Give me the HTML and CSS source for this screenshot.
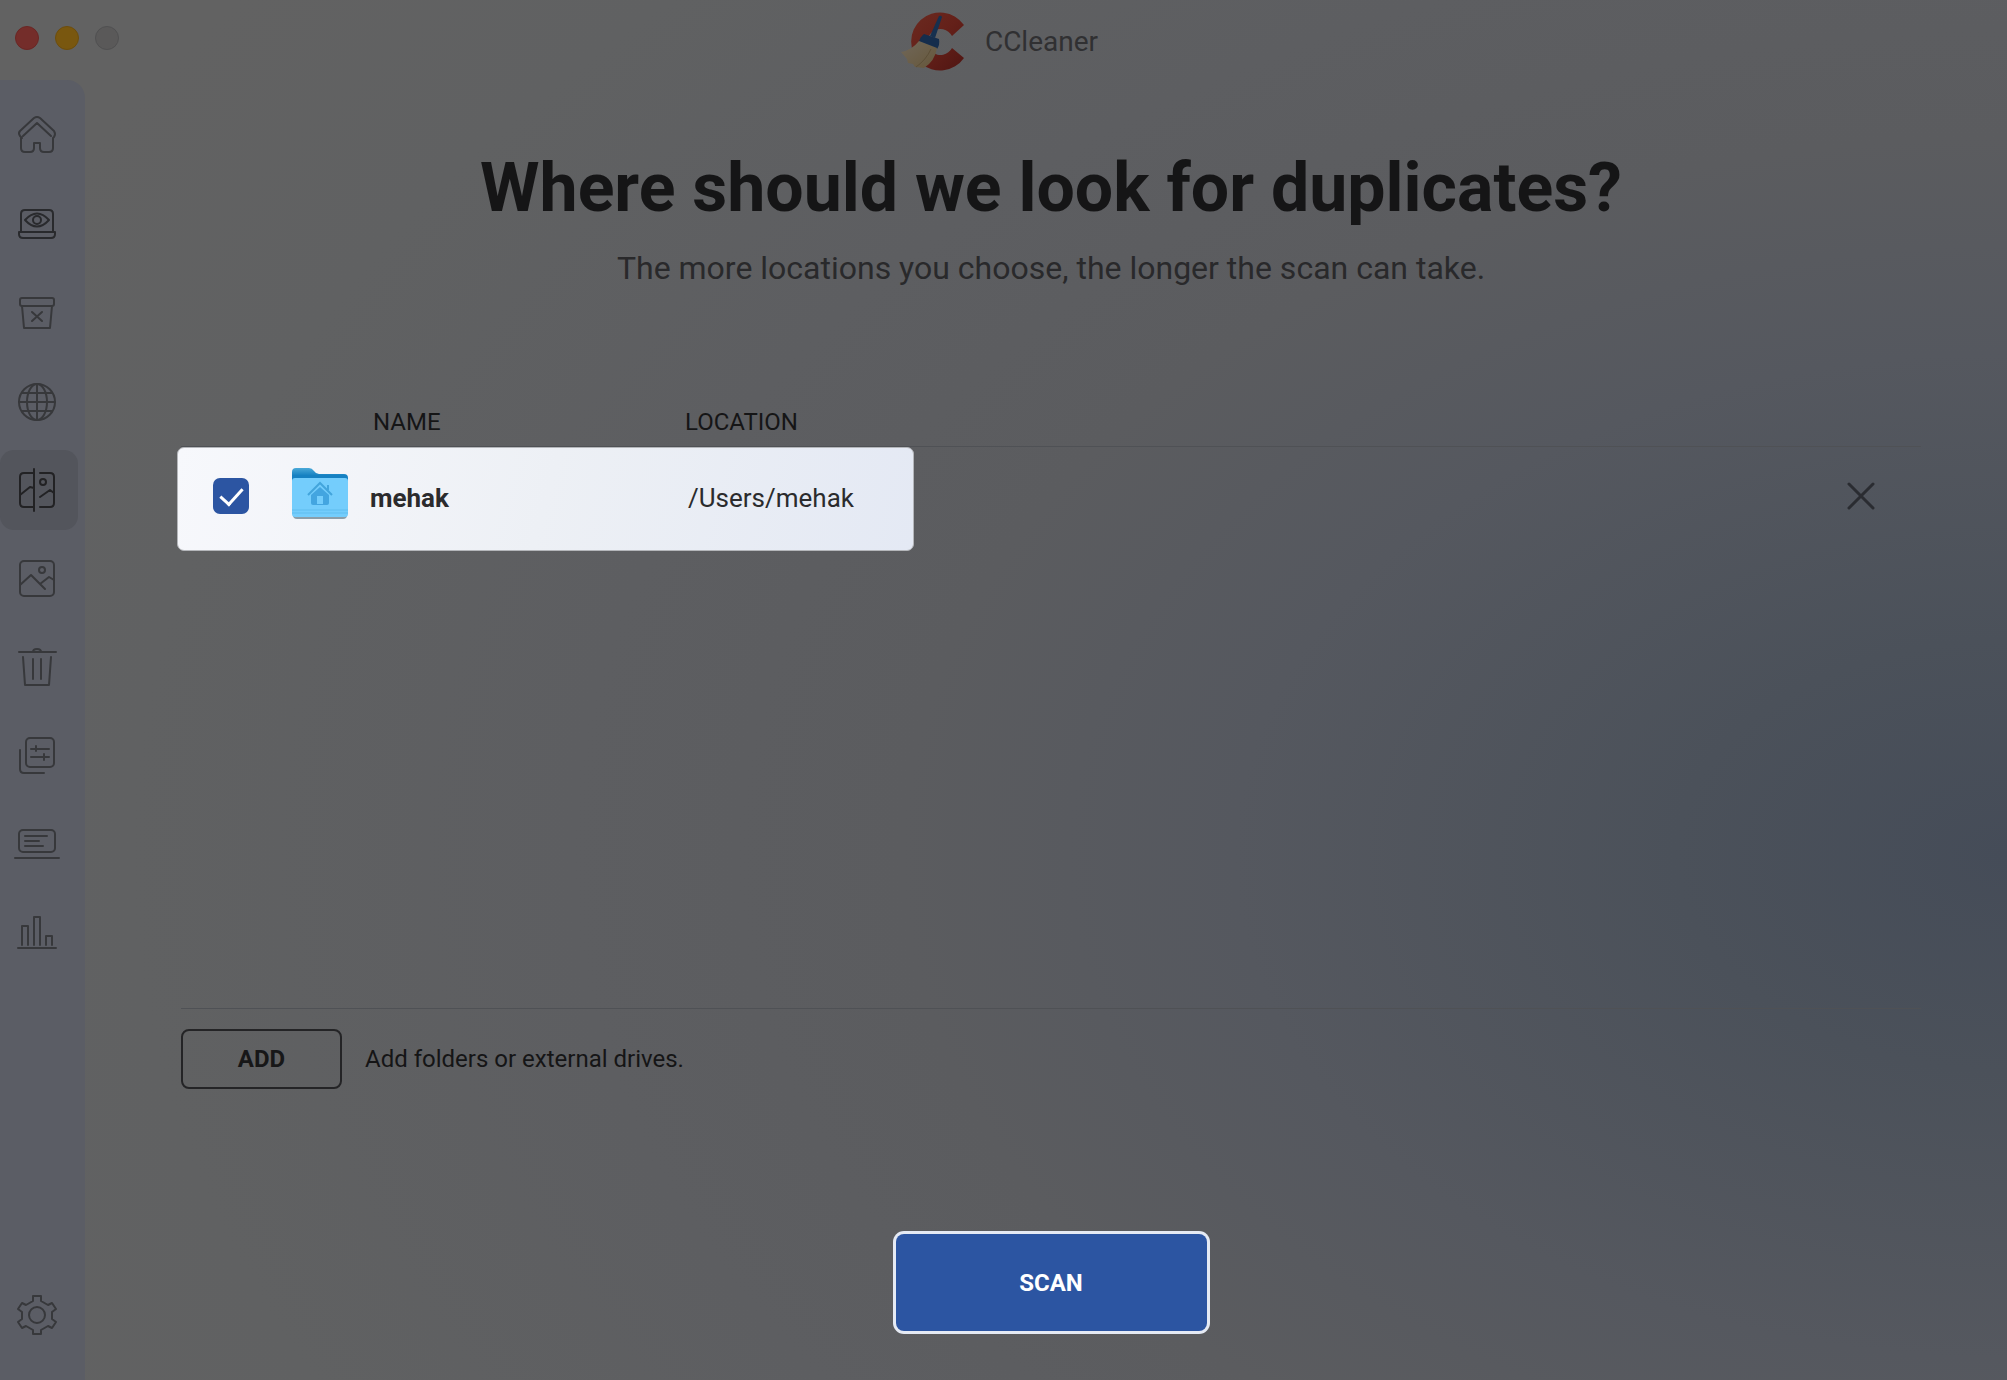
FILE: index.html
```
<!DOCTYPE html>
<html lang="en">
<head>
    <meta charset="UTF-8">
    <meta name="viewport" content="width=device-width, initial-scale=1.0">
    <title>CCleaner</title>
    <link rel="stylesheet" href="styles.css">
</head>
<body>
    <header class="titlebar">
        <div class="window-buttons">
            <button class="dot red" aria-label="Close"></button>
            <button class="dot yellow" aria-label="Minimize"></button>
            <button class="dot gray" aria-label="Zoom"></button>
        </div>
        <svg class="logo" viewBox="0 0 64 60" aria-hidden="true">
            <defs>
                <linearGradient id="ring" x1="0" y1="0" x2="1" y2="1">
                    <stop offset="0" stop-color="#6b2a20"/>
                    <stop offset="0.5" stop-color="#642019"/>
                    <stop offset="1" stop-color="#4f1512"/>
                </linearGradient>
                <linearGradient id="brush" x1="0" y1="0" x2="1" y2="1">
                    <stop offset="0" stop-color="#70675a"/>
                    <stop offset="1" stop-color="#66573a"/>
                </linearGradient>
            </defs>
            <path d="M63 13 A29 29 0 1 0 63 46 L51 36 A13 13 0 1 1 51 24 Z" fill="url(#ring)"/>
            <path d="M38 4 q2 -1 3 1 L34 26 L29 24 Z" fill="#16304f"/>
            <path d="M23 22 L38 27 Q39 33 36 37 L18 30 Q19 25 23 22 Z" fill="#152d4c"/>
            <path d="M18 29 L36 36 Q34 49 23 56 L14 55 L12 52 L7 51 L6 47 L0 40 Q11 38 18 29 Z" fill="url(#brush)"/>
            <path d="M30 37 Q25 48 15 55" fill="none" stroke="#5c4f37"/>
        </svg>
        <span class="app-name">CCleaner</span>
    </header>

    <div class="window">
        <nav class="sidebar">
            <a href="#" aria-label="Home">
                <svg viewBox="0 0 48 48"><path d="M9 28 L7 26 Q5 23 7 21 L21 8 Q24 6 27 8 L41 21 Q43 24 41 27 L40 28 V38 Q40 42 36 42 H31 Q27 42 27 38 V33 H21 V38 Q21 42 17 42 H12 Q8 42 8 38 V28 M10 26 L24 13 L38 26"/></svg>
            </a>
            <a href="#" aria-label="Privacy" class="dark">
                <svg viewBox="0 0 48 48"><path d="M8 33 V15 Q8 11 12 11 H36 Q40 11 40 15 V33 M6 33 H42 V35 Q42 39 38 39 H10 Q6 39 6 35 Z M12 21 Q24 8 36 21 Q24 34 12 21 Z"/><circle cx="24" cy="21" r="4"/></svg>
            </a>
            <a href="#" aria-label="Clean">
                <svg viewBox="0 0 48 48"><rect x="7" y="10" width="34" height="8" rx="2"/><path d="M9 18 L11 40 H37 L39 18 M19 24 L29 33 M29 24 L19 33"/></svg>
            </a>
            <a href="#" aria-label="Browser">
                <svg viewBox="0 0 48 48"><circle cx="24" cy="25" r="18"/><ellipse cx="24" cy="25" rx="10" ry="18"/><path d="M24 7 V43 M6 25 H42 M9 16 H39 M9 34 H39"/></svg>
            </a>
            <a href="#" aria-label="Duplicates" class="active">
                <svg viewBox="0 0 48 48"><path d="M21 3 V45 M21 7 H11 Q7 7 7 11 V37 Q7 41 11 41 H21 M27 7 H37 Q41 7 41 11 V37 Q41 41 37 41 H27 M7 29 L17 21 L21 22 M27 31 L37 24 L41 27"/><circle cx="30" cy="16" r="3"/></svg>
            </a>
            <a href="#" aria-label="Photos">
                <svg viewBox="0 0 48 48"><rect x="7" y="6" width="34" height="35" rx="4"/><circle cx="29" cy="15" r="3"/><path d="M7 30 L18 20 L32 34 M27 29 L36 22 L41 25"/></svg>
            </a>
            <a href="#" aria-label="Trash">
                <svg viewBox="0 0 48 48"><path d="M6 8 H43 M20 8 Q20 5 24 5 Q28 5 28 8 M10 13 L12 41 H36 L38 13 M20 15 V35 M28 15 V35"/></svg>
            </a>
            <a href="#" aria-label="Applications">
                <svg viewBox="0 0 48 48"><rect x="13" y="5" width="28" height="29" rx="4"/><path d="M7 17 V36 Q7 40 11 40 H31 M18 16 H36 M23 13 V18 M18 24 H36 M31 21 V27"/></svg>
            </a>
            <a href="#" aria-label="Startup">
                <svg viewBox="0 0 48 48"><rect x="6" y="8" width="36" height="22" rx="4"/><path d="M2 36 H46 M12 14 H34 M12 19 H26 M12 24 H30"/></svg>
            </a>
            <a href="#" aria-label="Analyzer">
                <svg viewBox="0 0 48 48"><path d="M5 37 H43 M9 34 V15 H15 V34 M21 34 V6 H27 V34 M33 34 V25 H39 V34"/></svg>
            </a>
            <a href="#" aria-label="Settings" class="settings">
                <svg viewBox="0 0 48 48"><path d="M20 4 H28 V9 L35 13 L39 11 L43 17 L39 20 V27 L43 30 L39 36 L35 34 L28 38 V42 H20 V38 L13 34 L9 36 L5 30 L9 27 V20 L5 17 L9 11 L13 13 L20 9 Z"/><circle cx="24" cy="23" r="8"/></svg>
            </a>
        </nav>

        <main>
            <h1>Where should we look for duplicates?</h1>
            <p class="subtitle">The more locations you choose, the longer the scan can take.</p>

            <div class="locations">
                <table>
                    <thead>
                        <tr>
                            <th class="col-check"></th>
                            <th class="col-icon"></th>
                            <th class="col-name">NAME</th>
                            <th>LOCATION</th>
                            <th class="col-remove"></th>
                        </tr>
                    </thead>
                    <tbody>
                        <tr>
                            <td class="check-cell"><input type="checkbox" id="mehak" checked></td>
                            <td>
                                <svg class="folder" viewBox="0 0 56 52" aria-hidden="true">
                                    <defs>
                                        <linearGradient id="folderBack" x1="0" y1="0" x2="0" y2="1">
                                            <stop offset="0" stop-color="#4aa9d8"/>
                                            <stop offset="0.25" stop-color="#1681c2"/>
                                        </linearGradient>
                                    </defs>
                                    <rect x="1" y="10" width="54" height="41" rx="4" fill="#8b9eaa"/>
                                    <path d="M0 4 Q0 0 4 0 H17 Q20 0 22 3 Q24 6 27 6 H52 Q56 6 56 10 V30 H0 Z" fill="url(#folderBack)"/>
                                    <rect x="0" y="10" width="56" height="39" rx="3" fill="#74cdfc"/>
                                    <path d="M0 42 H56 M0 45 H56" stroke="#5fbdef"/>
                                    <path d="M16 27 L28 15 L40 27 M36 22 V17" fill="none" stroke="#43a5dc" stroke-width="2"/>
                                    <path d="M19 27 L28 19 L37 27 V35 Q37 37 35 37 H21 Q19 37 19 35 Z" fill="#43a5e0"/>
                                    <rect x="25" y="28" width="6" height="8" fill="#74cdfc"/>
                                </svg>
                            </td>
                            <td class="name"><label for="mehak">mehak</label></td>
                            <td class="path">/Users/mehak</td>
                            <td class="remove-cell">
                                <button class="remove" aria-label="Remove">
                                    <svg viewBox="0 0 28 28"><path d="M2 2 L26 26 M26 2 L2 26"/></svg>
                                </button>
                            </td>
                        </tr>
                    </tbody>
                </table>
            </div>

            <div class="add-row">
                <button class="add">ADD</button>
                <span>Add folders or external drives.</span>
            </div>

            <button class="scan">SCAN</button>
        </main>
    </div>
</body>
</html>
```
FILE: styles.css
```
* {
    box-sizing: border-box;
}

body {
    margin: 0;
    min-height: 100vh;
    display: flex;
    flex-direction: column;
    font-family: Roboto, sans-serif;
    font-size: 24px;
    line-height: 32px;
    color: #151516;
    background: radial-gradient(ellipse 110% 104% at 100% 62%, #454c58 0%, #4b515a 15%, #55585f 35%, #5b5c5f 50%, #5d5e61 65%, #606162 85%, #626262 100%);
}

button {
    font-family: inherit;
    font-size: 24px;
    font-weight: bold;
    padding: 0;
    cursor: pointer;
}

/* Title bar */
.titlebar {
    position: relative;
    height: 80px;
    display: flex;
    justify-content: center;
    align-items: center;
    gap: 20px;
    padding: 4px 8px 0 0;
}

.window-buttons {
    position: absolute;
    left: 15px;
    top: 26px;
    display: flex;
    gap: 16px;
}

.dot {
    width: 24px;
    height: 24px;
    border: 1px solid;
    border-radius: 50%;
}

.red {
    background-color: #742d2a;
    border-color: #6a2624;
}

.yellow {
    background-color: #79570f;
    border-color: #6d4d0c;
}

.gray {
    background-color: #5a5959;
    border-color: #505051;
}

.logo {
    width: 64px;
    height: 60px;
}

.app-name {
    font-size: 28px;
    color: #303032;
}

.window {
    flex: 1;
    display: flex;
}

/* Sidebar */
.sidebar {
    width: 85px;
    flex-shrink: 0;
    display: flex;
    flex-direction: column;
    gap: 9px;
    padding: 14px 7px 24px 0;
    background-color: #5b5d65;
    border-top-right-radius: 18px;
}

.sidebar a {
    height: 80px;
    display: flex;
    justify-content: center;
    align-items: center;
    padding-right: 4px;
    border-radius: 14px;
    color: #37383b;
}

.sidebar a.dark {
    color: #292a2d;
}

.sidebar a.active {
    background-color: #53555c;
    color: #222224;
}

.sidebar svg {
    width: 48px;
    height: 48px;
    fill: none;
    stroke: currentColor;
    stroke-width: 2;
    stroke-linecap: round;
    stroke-linejoin: round;
}

.sidebar .settings {
    margin-top: auto;
}

/* Content */
main {
    flex: 1;
    display: flex;
    flex-direction: column;
    padding: 66px 86px 49px 96px;
    isolation: isolate;
}

h1 {
    margin: 0;
    font-size: 68px;
    line-height: 84px;
    text-align: center;
}

.subtitle {
    margin: 18px 0 0;
    font-size: 32px;
    line-height: 40px;
    text-align: center;
    color: #29292b;
}

.locations {
    flex: 1;
    margin-top: 118px;
    border-bottom: 1px solid #4f5155;
}

table {
    width: 100%;
    table-layout: fixed;
    border-collapse: collapse;
}

th,
td {
    padding: 0;
    text-align: left;
    font-weight: normal;
}

th {
    height: 40px;
    padding-left: 3px;
    vertical-align: top;
    border-bottom: 1px solid #4f5155;
}

td {
    height: 100px;
    color: #2b2b2d;
}

.col-check {
    width: 111px;
}

.col-icon {
    width: 78px;
}

.col-name {
    width: 312px;
}

.col-remove {
    width: 92px;
}

/* Highlight behind the selected location */
.check-cell {
    position: relative;
    padding-left: 32px;
}

.check-cell::before {
    content: "";
    position: absolute;
    z-index: -1;
    left: -4px;
    top: 0;
    width: 735px;
    height: 102px;
    border: 1px solid #b4b6ba;
    border-radius: 7px;
    background: linear-gradient(105deg, #f7f8fc, #edf0f5 50%, #e4e9f4);
}

input[type="checkbox"] {
    display: block;
    appearance: none;
    width: 36px;
    height: 36px;
    margin: 0;
    border-radius: 7px;
    background-color: #2c55a2;
}

input[type="checkbox"]:checked::before {
    content: "";
    display: block;
    width: 10px;
    height: 19px;
    margin: 5px 0 0 12px;
    border: solid #ffffff;
    border-width: 0 3px 3px 0;
    transform: rotate(42deg);
}

.folder {
    display: block;
    width: 56px;
    height: 52px;
    margin-bottom: 4px;
}

.name,
.path {
    padding-top: 4px;
    font-size: 26px;
}

.name {
    font-weight: bold;
}

.path {
    padding-left: 6px;
}

.remove {
    display: block;
    width: 28px;
    height: 28px;
    margin-left: 18px;
    border: none;
    background: none;
}

.remove svg {
    display: block;
    fill: none;
    stroke: #2a2c31;
    stroke-width: 3;
    stroke-linecap: round;
}

.add-row {
    display: flex;
    align-items: center;
    gap: 23px;
    margin-top: 20px;
}

.add {
    width: 161px;
    height: 60px;
    border: 2px solid #242426;
    border-radius: 8px;
    background: none;
    color: #171718;
}

.scan {
    align-self: center;
    width: 311px;
    height: 97px;
    margin-top: 145px;
    border: none;
    border-radius: 8px;
    background-color: #2c55a2;
    color: #ffffff;
    box-shadow: 0 0 0 3px #e5eaf4;
}
```
